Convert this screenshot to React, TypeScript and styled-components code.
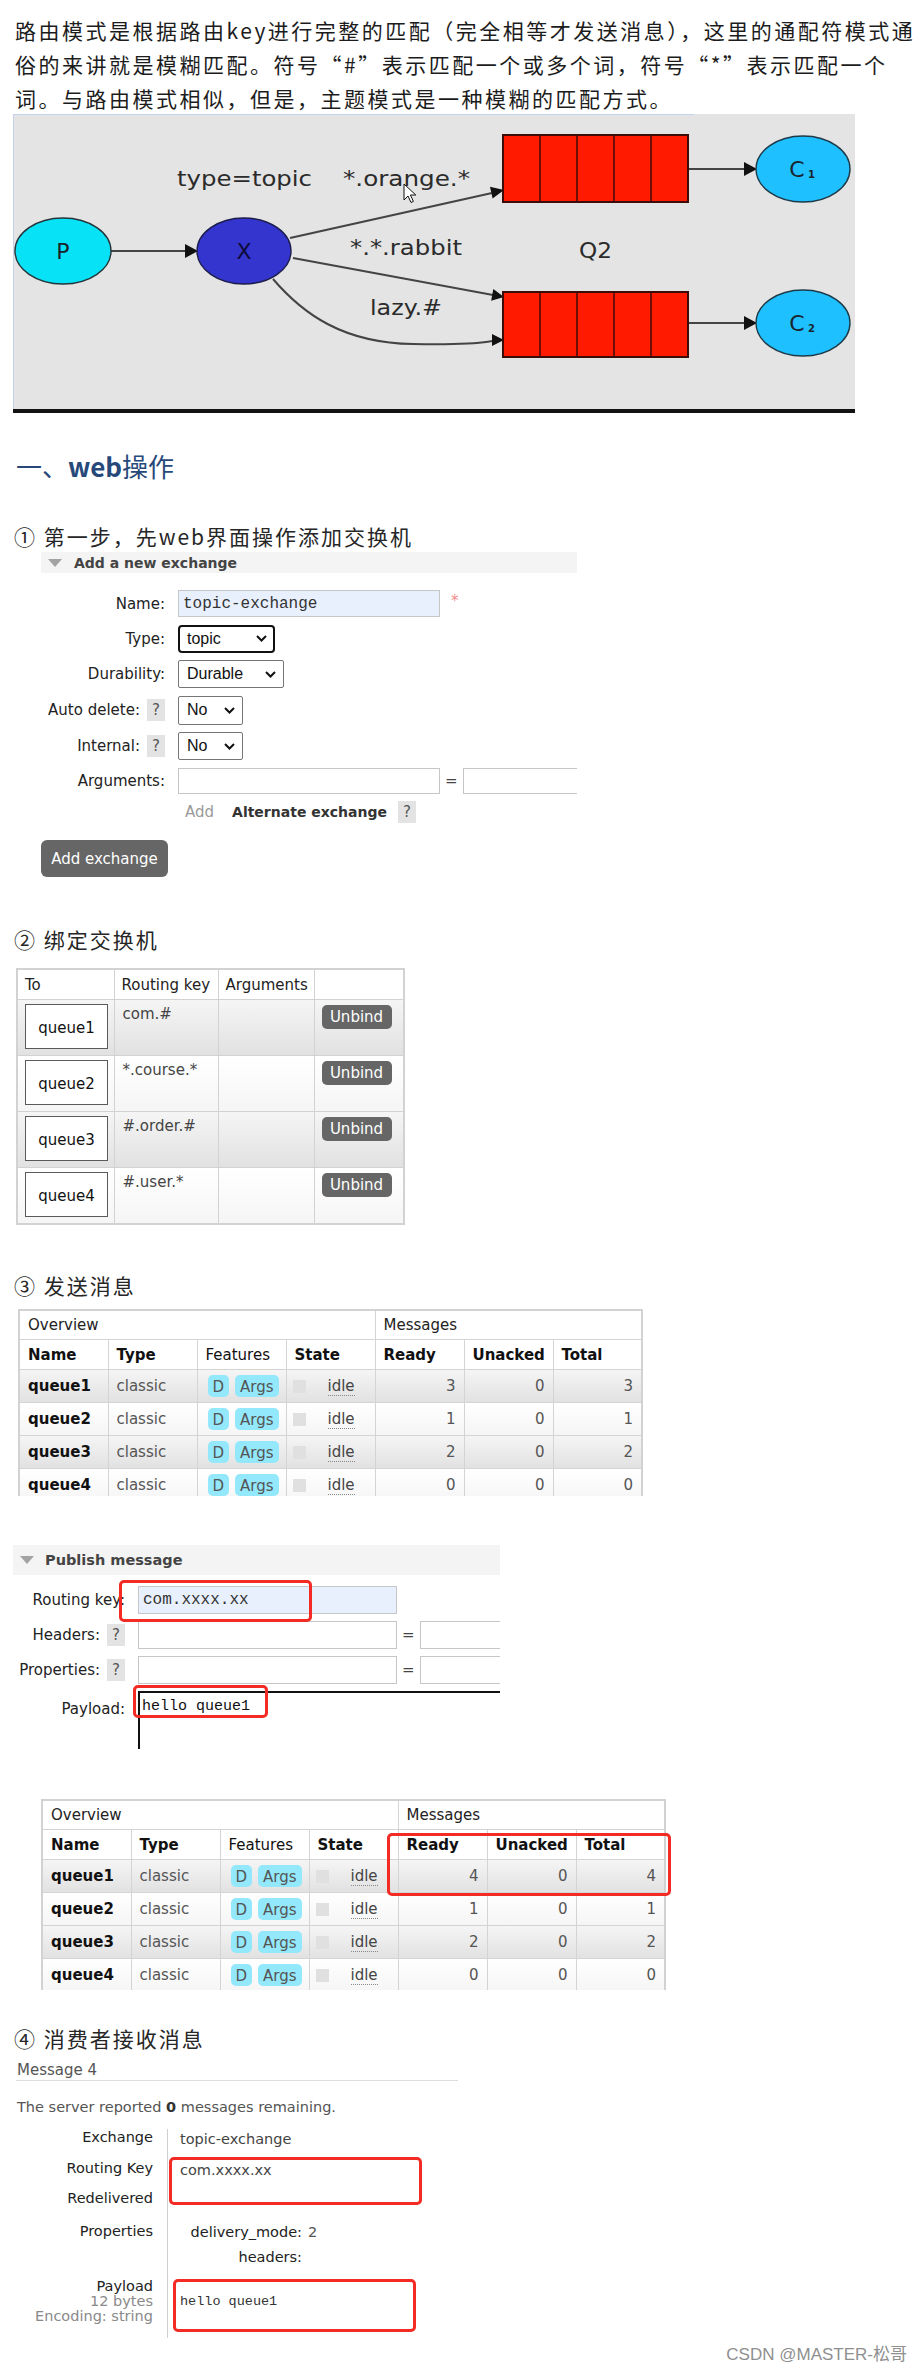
import React from 'react';
import styled, { createGlobalStyle, css } from 'styled-components';

const CJK = `'Noto Sans CJK SC', sans-serif`;
const UI = `'DejaVu Sans', Verdana, sans-serif`;
const MONO = `'Liberation Mono', 'Courier New', monospace`;

const GlobalStyle = createGlobalStyle`
  html, body {
    margin: 0;
    padding: 0;
    background: #fff;
  }
  body {
    font-family: ${UI};
    color: #222;
  }
`;

const Page = styled.div`
  position: relative;
  width: 924px;
  height: 2375px;
  padding-top: 13px;
  box-sizing: border-box;
  overflow: hidden;
`;

const Intro = styled.p`
  margin: 0 0 -1px 15px;
  font-family: ${CJK};
  font-size: 21px;
  line-height: 34px;
  letter-spacing: 2.5px;
  color: #1c1c1c;
  white-space: nowrap;
`;

/* ---------- topic diagram ---------- */

const DiagramFrame = styled.div`
  width: 842px;
  margin-left: 13px;
  background: #e4e4e4;
  border-bottom: 4px solid #121212;

  svg {
    display: block;
  }
`;

const Queue = ({ y, h }: { y: number; h: number }) => (
  <g>
    <rect x={490} y={y} width={185} height={h} fill="#ff1a00" stroke="#3e0c08" strokeWidth={2} />
    {[527, 564, 601, 638].map((x) => (
      <line key={x} x1={x} y1={y} x2={x} y2={y + h} stroke="#3e0c08" strokeWidth={1.5} />
    ))}
  </g>
);

const Diagram = () => (
  <DiagramFrame>
    <svg width="842" height="295" viewBox="0 0 842 295" fontFamily="DejaVu Sans, sans-serif">
      <line x1="0" y1="0.5" x2="681" y2="0.5" stroke="#c3d3ea" />
      <line x1="0.5" y1="0" x2="0.5" y2="295" stroke="#c3d3ea" />

      {/* edges */}
      <line x1="98" y1="137" x2="173" y2="137" stroke="#444" strokeWidth="2" />
      <polygon points="172,130 185,137 172,144" fill="#111" />
      <line x1="277" y1="124" x2="479" y2="79" stroke="#444" strokeWidth="2" />
      <polygon points="491,76 479.6,84.5 477,72.7" fill="#111" />
      <line x1="280" y1="144" x2="480" y2="181" stroke="#444" strokeWidth="2" />
      <polygon points="491,183 478.1,186.7 480.3,174.9" fill="#111" />
      <path d="M260,165 C290,200 330,229 400,230 S470,228 480,227" fill="none" stroke="#444" strokeWidth="2" />
      <polygon points="491,226 479,220 479,232" fill="#111" />
      <line x1="675" y1="55" x2="732" y2="55" stroke="#444" strokeWidth="2" />
      <polygon points="744,55 731,48 731,62" fill="#111" />
      <line x1="675" y1="209" x2="732" y2="209" stroke="#444" strokeWidth="2" />
      <polygon points="744,209 731,202 731,216" fill="#111" />

      {/* nodes */}
      <ellipse cx="50" cy="137" rx="48" ry="33" fill="#08e2f7" stroke="#23343a" strokeWidth="1.4" />
      <text x="50" y="145" fontSize="22" textAnchor="middle" fill="#1a1f2a">P</text>
      <ellipse cx="231" cy="137" rx="47" ry="33" fill="#3434cf" stroke="#1c1c4c" strokeWidth="1.4" />
      <text x="231" y="145" fontSize="22" textAnchor="middle" fill="#0c0c3a">X</text>
      <Queue y={21} h={67} />
      <Queue y={178} h={65} />
      <ellipse cx="790" cy="55" rx="47" ry="33" fill="#1ec0ff" stroke="#1d3a48" strokeWidth="1.4" />
      <text x="784" y="63" fontSize="22" textAnchor="middle" fill="#1a2530">C</text>
      <text x="795" y="64" fontSize="10" fontWeight="700" fill="#1a2530">1</text>
      <ellipse cx="790" cy="209" rx="47" ry="33" fill="#1ec0ff" stroke="#1d3a48" strokeWidth="1.4" />
      <text x="784" y="217" fontSize="22" textAnchor="middle" fill="#1a2530">C</text>
      <text x="795" y="218" fontSize="10" fontWeight="700" fill="#1a2530">2</text>

      {/* labels */}
      <g fontSize="22" fill="#2b2b2b">
        <text x="164" y="72" textLength="135" lengthAdjust="spacingAndGlyphs">type=topic</text>
        <text x="330" y="72" textLength="127" lengthAdjust="spacingAndGlyphs">*.orange.*</text>
        <text x="337" y="141" textLength="112" lengthAdjust="spacingAndGlyphs">*.*.rabbit</text>
        <text x="357" y="201" textLength="72" lengthAdjust="spacingAndGlyphs">lazy.#</text>
        <text x="566" y="144" textLength="33" lengthAdjust="spacingAndGlyphs">Q2</text>
      </g>

      {/* mouse pointer */}
      <path d="M391,70 l0,16 l4,-4 l3,6.5 l2.4,-1.1 l-3,-6.4 l5.4,0 z" fill="#fff" stroke="#111" strokeWidth="1" />
    </svg>
  </DiagramFrame>
);

/* ---------- headings ---------- */

const Heading = styled.h2`
  margin: 35px 0 0 16px;
  font-family: ${CJK};
  font-size: 26px;
  line-height: 36px;
  font-weight: 400;
  color: #27497a;

  b {
    font-weight: 700;
  }
`;

const StepTitle = styled.h3<{ $top: number }>`
  margin: ${(p) => p.$top}px 0 0 14px;
  font-family: ${CJK};
  font-size: 21px;
  line-height: 32px;
  letter-spacing: 2px;
  font-weight: 400;
  color: #262626;
`;

/* ---------- management UI pieces ---------- */

const Section = styled.section<{ $x: number; $top: number }>`
  position: relative;
  margin: ${(p) => p.$top}px 0 0 ${(p) => p.$x}px;
`;

const Clip = styled.div<{ $w?: number; $h?: number }>`
  overflow: hidden;
  ${(p) => p.$w && css`width: ${p.$w}px;`}
  ${(p) => p.$h && css`height: ${p.$h}px;`}
`;

const PanelHeader = styled.div<{ $h: number; $size: number; $gap: number }>`
  display: flex;
  align-items: center;
  gap: ${(p) => p.$gap}px;
  height: ${(p) => p.$h}px;
  padding-left: 7px;
  background: #f4f4f4;
  font-weight: 700;
  font-size: ${(p) => p.$size}px;
  color: #444;
  white-space: nowrap;
`;

const Caret = styled.span`
  width: 0;
  height: 0;
  border-left: 7px solid transparent;
  border-right: 7px solid transparent;
  border-top: 8px solid #a3a3a3;
`;

const FormGrid = styled.div<{ $label: number; $top: number; $gap: number }>`
  display: grid;
  grid-template-columns: ${(p) => p.$label}px 1fr;
  column-gap: 13px;
  row-gap: ${(p) => p.$gap}px;
  align-items: center;
  margin-top: ${(p) => p.$top}px;
  font-size: 15px;
  color: #222;
`;

const Label = styled.div<{ $top?: boolean }>`
  display: flex;
  justify-content: flex-end;
  align-items: center;
  gap: 7px;
  white-space: nowrap;
  ${(p) =>
    p.$top &&
    css`
      align-self: start;
      padding-top: 9px;
    `}
`;

const Help = styled.span`
  display: inline-flex;
  align-items: center;
  justify-content: center;
  width: 18px;
  height: 22px;
  background: #e3e3e3;
  color: #555;
  font-size: 15px;
`;

const Controls = styled.div`
  display: flex;
  align-items: center;
  gap: 5px;
  min-width: 0;
  white-space: nowrap;
`;

const TextField = styled.div<{ $w: number; $h?: number; $fill?: boolean }>`
  flex: none;
  display: flex;
  align-items: center;
  width: ${(p) => p.$w}px;
  height: ${(p) => p.$h ?? 28}px;
  box-sizing: border-box;
  padding: 0 4px;
  border: 1px solid #c6c6c6;
  background: ${(p) => (p.$fill ? '#e8f0fe' : '#fff')};
  font-family: ${MONO};
  font-size: 16px;
  color: #333;
`;

const Required = styled.span`
  align-self: flex-start;
  margin: 2px 0 0 6px;
  color: #f08a8a;
  font-size: 15px;
`;

const Equals = styled.span`
  color: #444;
`;

const SelectBox = styled.div<{ $w: number; $h?: number; $focus?: boolean }>`
  flex: none;
  display: flex;
  align-items: center;
  justify-content: space-between;
  width: ${(p) => p.$w}px;
  height: ${(p) => p.$h ?? 28}px;
  box-sizing: border-box;
  padding: 0 7px 0 8px;
  border: 1px solid #767676;
  border-radius: 2px;
  background: #fff;
  font-family: 'Liberation Sans', Arial, sans-serif;
  font-size: 16px;
  color: #111;
  ${(p) =>
    p.$focus &&
    css`
      border: 2px solid #111;
      border-radius: 4px;
      padding: 0 6px 0 7px;
    `}
`;

const Select = ({ value, w, h, focus }: { value: string; w: number; h?: number; focus?: boolean }) => (
  <SelectBox $w={w} $h={h} $focus={focus}>
    {value}
    <svg width="11" height="7" viewBox="0 0 11 7">
      <path d="M1 1l4.5 4.5L10 1" fill="none" stroke="#111" strokeWidth="2" />
    </svg>
  </SelectBox>
);

const MutedLink = styled.span`
  margin-left: 7px;
  color: #9a9a9a;
`;

const Strong = styled.span`
  margin-left: 13px;
  margin-right: 6px;
  font-weight: 700;
  font-size: 14px;
  color: #333;
`;

const GreyButton = styled.button<{ $w: number; $h: number; $r: number }>`
  display: inline-flex;
  align-items: center;
  justify-content: center;
  width: ${(p) => p.$w}px;
  height: ${(p) => p.$h}px;
  padding: 0;
  border: none;
  border-radius: ${(p) => p.$r}px;
  background: #666;
  color: #fff;
  font-family: ${UI};
  font-size: 15px;
  cursor: pointer;
`;

const ButtonRow = styled.div`
  margin-top: 17px;
`;

const PayloadArea = styled.div`
  width: 380px;
  height: 59px;
  box-sizing: border-box;
  padding: 6px 2px;
  border-top: 2px solid #111;
  border-left: 2px solid #111;
  font-family: ${MONO};
  font-size: 15px;
  line-height: 16px;
  color: #111;
`;

const RedBox = styled.div<{ $x: number; $y: number; $w: number; $h: number }>`
  position: absolute;
  left: ${(p) => p.$x}px;
  top: ${(p) => p.$y}px;
  width: ${(p) => p.$w}px;
  height: ${(p) => p.$h}px;
  box-sizing: border-box;
  border: 3px solid #f32b24;
  border-radius: 5px;
  pointer-events: none;
`;

/* ---------- bindings table ---------- */

const shadeGrey = css`
  background: linear-gradient(#f5f5f5, #e1e1e1);
`;
const shadeWhite = css`
  background: linear-gradient(#ffffff, #f5f5f5);
`;

const BindTable = styled.table`
  margin: 13px 0 0 16px;
  width: 387px;
  table-layout: fixed;
  border-collapse: collapse;
  border: 2px solid #d2d2d2;
  font-size: 15px;

  col:nth-child(1) { width: 97px; }
  col:nth-child(2) { width: 104px; }
  col:nth-child(3) { width: 96px; }
  col:nth-child(4) { width: 90px; }

  th,
  td {
    border: 1px solid #d2d2d2;
    padding: 0;
    vertical-align: top;
  }

  th {
    height: 29px;
    padding: 0 7px;
    text-align: left;
    font-weight: 400;
    vertical-align: middle;
    background: #fff;
  }
`;

const BindRow = styled.tr<{ $shade: boolean }>`
  height: 56px;
  ${(p) => (p.$shade ? shadeGrey : shadeWhite)}
`;

const QueueBoxCell = styled.td`
  padding: 4px 0 0 7px !important;
`;

const QueueBox = styled.div`
  display: flex;
  align-items: center;
  justify-content: center;
  width: 83px;
  height: 45px;
  box-sizing: border-box;
  padding-top: 3px;
  border: 1px solid #5a5a5a;
  background: #fff;
  color: #111;
`;

const KeyCell = styled.td`
  padding: 5px 7px 0 8px !important;
  color: #444;
`;

const UnbindCell = styled.td`
  padding: 5px 0 0 7px !important;
`;

/* ---------- queues table ---------- */

const QTable = styled.table`
  table-layout: fixed;
  width: 625px;
  border-collapse: collapse;
  border-top: 2px solid #d2d2d2;
  border-left: 2px solid #d2d2d2;
  border-right: 2px solid #d2d2d2;
  font-size: 15px;

  col {
    width: 89px;
  }

  th,
  td {
    border: 1px solid #d4d4d4;
    padding: 0 8px;
    white-space: nowrap;
    overflow: hidden;
  }

  thead tr {
    height: 30px;
    background: #fff;
  }
`;

const GroupCell = styled.th`
  text-align: left;
  font-weight: 400;
  color: #222;
`;

const HeadCell = styled.th<{ $light?: boolean }>`
  text-align: left;
  font-weight: ${(p) => (p.$light ? 400 : 700)};
  color: #111;
`;

const DataRow = styled.tr<{ $shade: boolean }>`
  height: 33px;
  ${(p) => (p.$shade ? shadeGrey : shadeWhite)}
`;

const NameCell = styled.td`
  font-weight: 700;
  color: #111;
`;

const TypeCell = styled.td`
  color: #555;
`;

const FeatureCell = styled.td`
  padding-left: 10px !important;
`;

const Badge = styled.span`
  display: inline-block;
  height: 22px;
  line-height: 24px;
  margin-right: 6px;
  padding: 0 5px;
  border-radius: 5px;
  background: #93e8fc;
  color: #555;
  vertical-align: middle;
`;

const StateCell = styled.td`
  padding-left: 6px !important;
`;

const StateDot = styled.span`
  display: inline-block;
  width: 13px;
  height: 13px;
  margin-right: 22px;
  background: #e0e0e0;
  vertical-align: middle;
`;

const Idle = styled.span`
  color: #444;
  border-bottom: 1px dotted #888;
`;

const NumCell = styled.td`
  text-align: right;
  color: #555;
`;

type QueueCount = { name: string; ready: number; unacked: number; total: number };

const columns = ['name', 'type', 'features', 'state', 'ready', 'unacked', 'total'];

const QueueTable = ({ rows }: { rows: QueueCount[] }) => (
  <QTable>
    <colgroup>
      {columns.map((c) => (
        <col key={c} />
      ))}
    </colgroup>
    <thead>
      <tr>
        <GroupCell colSpan={4}>Overview</GroupCell>
        <GroupCell colSpan={3}>Messages</GroupCell>
      </tr>
      <tr>
        <HeadCell>Name</HeadCell>
        <HeadCell>Type</HeadCell>
        <HeadCell $light>Features</HeadCell>
        <HeadCell>State</HeadCell>
        <HeadCell>Ready</HeadCell>
        <HeadCell>Unacked</HeadCell>
        <HeadCell>Total</HeadCell>
      </tr>
    </thead>
    <tbody>
      {rows.map((row, i) => (
        <DataRow key={row.name} $shade={i % 2 === 0}>
          <NameCell>{row.name}</NameCell>
          <TypeCell>classic</TypeCell>
          <FeatureCell>
            <Badge>D</Badge>
            <Badge>Args</Badge>
          </FeatureCell>
          <StateCell>
            <StateDot />
            <Idle>idle</Idle>
          </StateCell>
          <NumCell>{row.ready}</NumCell>
          <NumCell>{row.unacked}</NumCell>
          <NumCell>{row.total}</NumCell>
        </DataRow>
      ))}
    </tbody>
  </QTable>
);

const beforePublish: QueueCount[] = [
  { name: 'queue1', ready: 3, unacked: 0, total: 3 },
  { name: 'queue2', ready: 1, unacked: 0, total: 1 },
  { name: 'queue3', ready: 2, unacked: 0, total: 2 },
  { name: 'queue4', ready: 0, unacked: 0, total: 0 },
];

const afterPublish: QueueCount[] = [
  { name: 'queue1', ready: 4, unacked: 0, total: 4 },
  { name: 'queue2', ready: 1, unacked: 0, total: 1 },
  { name: 'queue3', ready: 2, unacked: 0, total: 2 },
  { name: 'queue4', ready: 0, unacked: 0, total: 0 },
];

const bindings = [
  { queue: 'queue1', key: 'com.#' },
  { queue: 'queue2', key: '*.course.*' },
  { queue: 'queue3', key: '#.order.#' },
  { queue: 'queue4', key: '#.user.*' },
];

/* ---------- get message view ---------- */

const MessageTitle = styled.div`
  width: 441px;
  margin: 6px 0 0 16px;
  padding-left: 1px;
  line-height: 20px;
  font-size: 15px;
  color: #555;
  border-bottom: 1px solid #ddd;
`;

const Remaining = styled.div`
  margin: 16px 0 0 17px;
  line-height: 20px;
  font-size: 14.5px;
  color: #555;

  b {
    font-weight: 700;
    color: #333;
  }
`;

const KeyValues = styled.div`
  position: relative;
  display: grid;
  grid-template-columns: 151px 300px;
  grid-template-rows: 31px 30px 33px 55px 60px;
  margin: 12px 0 0 16px;
  font-size: 14.5px;
  line-height: 16px;
`;

const KeyLabel = styled.div`
  padding-right: 14px;
  text-align: right;
  color: #222;
  white-space: nowrap;
`;

const SubNote = styled.div`
  line-height: 15px;
  color: #8a8a8a;
`;

const KeyValue = styled.div<{ $pad?: number }>`
  padding: ${(p) => p.$pad ?? 1}px 0 0 12px;
  border-left: 1px solid #cfcfcf;
  color: #444;
  white-space: nowrap;
`;

const PropGrid = styled.div`
  display: grid;
  grid-template-columns: 120px auto;
  justify-content: start;
  column-gap: 6px;
  row-gap: 9px;
  padding-left: 2px;

  span:nth-child(odd) {
    text-align: right;
    color: #222;
  }
  span:nth-child(even) {
    color: #555;
  }
`;

const PayloadText = styled.div`
  font-family: ${MONO};
  font-size: 13.5px;
  color: #333;
`;

const Watermark = styled.div`
  position: absolute;
  right: 17px;
  top: 2345px;
  font-family: 'Liberation Sans', ${CJK};
  font-size: 17px;
  line-height: 20px;
  color: #8f8f8f;
`;

export default function App() {
  return (
    <>
      <GlobalStyle />
      <Page>
        <Intro>
          路由模式是根据路由key进行完整的匹配（完全相等才发送消息），这里的通配符模式通
          <br />
          俗的来讲就是模糊匹配。符号“#”表示匹配一个或多个词，符号“*”表示匹配一个
          <br />
          词。与路由模式相似，但是，主题模式是一种模糊的匹配方式。
        </Intro>

        <Diagram />

        <Heading>
          一、<b>web</b>操作
        </Heading>

        <StepTitle $top={36}>① 第一步，先web界面操作添加交换机</StepTitle>
        <Section $x={41} $top={0}>
          <Clip $w={536}>
            <PanelHeader $h={21} $size={14} $gap={12}>
              <Caret />
              Add a new exchange
            </PanelHeader>
            <FormGrid $label={124} $top={17} $gap={7.5}>
              <Label>Name:</Label>
              <Controls>
                <TextField $w={262} $h={27} $fill>
                  topic-exchange
                </TextField>
                <Required>*</Required>
              </Controls>

              <Label>Type:</Label>
              <Controls>
                <Select value="topic" w={97} focus />
              </Controls>

              <Label>Durability:</Label>
              <Controls>
                <Select value="Durable" w={106} />
              </Controls>

              <Label>
                Auto delete: <Help>?</Help>
              </Label>
              <Controls>
                <Select value="No" w={65} h={29} />
              </Controls>

              <Label>
                Internal: <Help>?</Help>
              </Label>
              <Controls>
                <Select value="No" w={65} />
              </Controls>

              <Label>Arguments:</Label>
              <Controls>
                <TextField $w={262} $h={26} />
                <Equals>=</Equals>
                <TextField $w={160} $h={26} />
              </Controls>

              <span />
              <Controls>
                <MutedLink>Add</MutedLink>
                <Strong>Alternate exchange</Strong>
                <Help>?</Help>
              </Controls>
            </FormGrid>
            <ButtonRow>
              <GreyButton $w={127} $h={37} $r={6}>
                Add exchange
              </GreyButton>
            </ButtonRow>
          </Clip>
        </Section>

        <StepTitle $top={46}>② 绑定交换机</StepTitle>
        <BindTable>
          <colgroup>
            <col />
            <col />
            <col />
            <col />
          </colgroup>
          <thead>
            <tr>
              <th>To</th>
              <th>Routing key</th>
              <th>Arguments</th>
              <th />
            </tr>
          </thead>
          <tbody>
            {bindings.map((b, i) => (
              <BindRow key={b.queue} $shade={i % 2 === 0}>
                <QueueBoxCell>
                  <QueueBox>{b.queue}</QueueBox>
                </QueueBoxCell>
                <KeyCell>{b.key}</KeyCell>
                <td />
                <UnbindCell>
                  <GreyButton $w={70} $h={24} $r={5}>
                    Unbind
                  </GreyButton>
                </UnbindCell>
              </BindRow>
            ))}
          </tbody>
        </BindTable>

        <StepTitle $top={44}>③ 发送消息</StepTitle>
        <Section $x={18} $top={8}>
          <Clip $h={187}>
            <QueueTable rows={beforePublish} />
          </Clip>
        </Section>

        <Section $x={13} $top={49}>
          <Clip $w={487} $h={204}>
            <PanelHeader $h={30} $size={14.5} $gap={11}>
              <Caret />
              Publish message
            </PanelHeader>
            <FormGrid $label={112} $top={11} $gap={7}>
              <Label>Routing key:</Label>
              <Controls>
                <TextField $w={259} $fill>
                  com.xxxx.xx
                </TextField>
              </Controls>

              <Label>
                Headers: <Help>?</Help>
              </Label>
              <Controls>
                <TextField $w={259} />
                <Equals>=</Equals>
                <TextField $w={120} />
              </Controls>

              <Label>
                Properties: <Help>?</Help>
              </Label>
              <Controls>
                <TextField $w={259} />
                <Equals>=</Equals>
                <TextField $w={120} />
              </Controls>

              <Label $top>Payload:</Label>
              <PayloadArea>hello queue1</PayloadArea>
            </FormGrid>
          </Clip>
          <RedBox $x={106} $y={35} $w={193} $h={42} />
          <RedBox $x={120} $y={140} $w={135} $h={33} />
        </Section>

        <Section $x={41} $top={50}>
          <Clip $h={191}>
            <QueueTable rows={afterPublish} />
          </Clip>
          <RedBox $x={346} $y={34} $w={284} $h={63} />
        </Section>

        <StepTitle $top={32}>④ 消费者接收消息</StepTitle>
        <MessageTitle>Message 4</MessageTitle>
        <Remaining>
          The server reported <b>0</b> messages remaining.
        </Remaining>
        <KeyValues>
          <KeyLabel>Exchange</KeyLabel>
          <KeyValue $pad={2}>topic-exchange</KeyValue>

          <KeyLabel>Routing Key</KeyLabel>
          <KeyValue $pad={2}>com.xxxx.xx</KeyValue>

          <KeyLabel>Redelivered</KeyLabel>
          <KeyValue />

          <KeyLabel>Properties</KeyLabel>
          <KeyValue>
            <PropGrid>
              <span>delivery_mode:</span>
              <span>2</span>
              <span>headers:</span>
              <span />
            </PropGrid>
          </KeyValue>

          <KeyLabel>
            Payload
            <SubNote>12 bytes</SubNote>
            <SubNote>Encoding: string</SubNote>
          </KeyLabel>
          <KeyValue $pad={16}>
            <PayloadText>hello queue1</PayloadText>
          </KeyValue>

          <RedBox $x={153} $y={28} $w={253} $h={48} />
          <RedBox $x={157} $y={150} $w={243} $h={53} />
        </KeyValues>

        <Watermark>CSDN @MASTER-松哥</Watermark>
      </Page>
    </>
  );
}
